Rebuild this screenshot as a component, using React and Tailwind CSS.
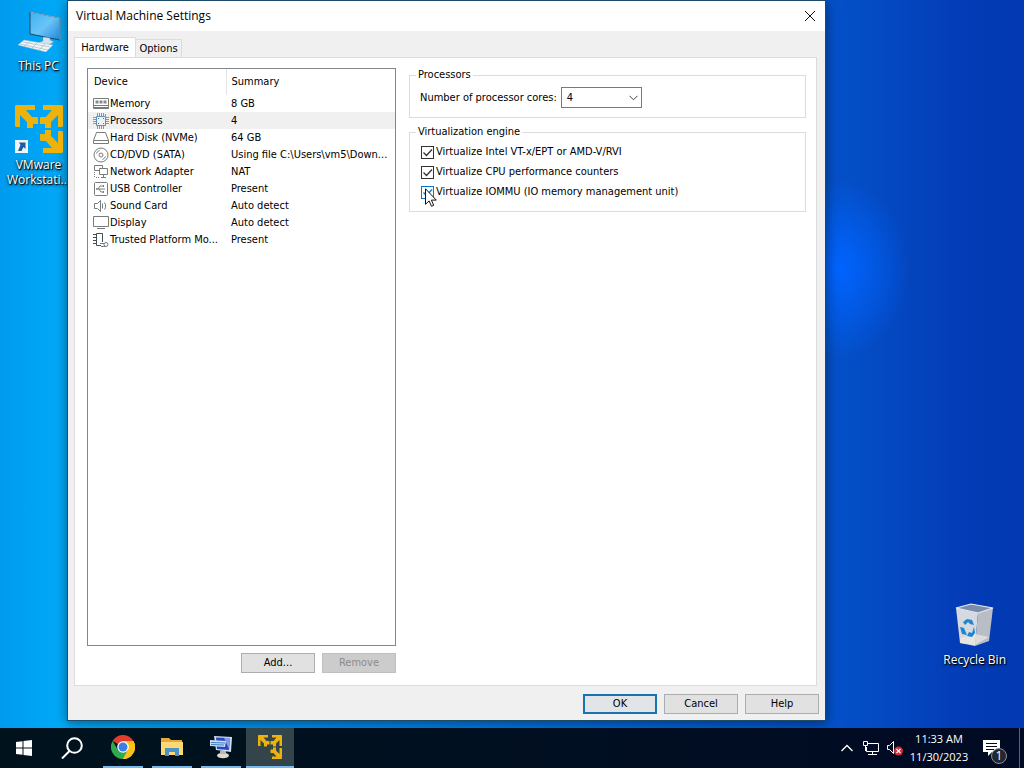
const arrow = 'M1 0h19v5h-9l6 7h5l1 1v6h-5v4h-6v-6l-7-7v12H1l-1-1V1z'

function VmwareLogo({ className }) {
  return (
    <svg viewBox="0 0 48 48" className={className} fill="#eeb20c" aria-hidden="true">
      <path d={arrow} />
      <path d={arrow} transform="matrix(-1 0 0 1 48 0)" />
      <path d={arrow} transform="matrix(-1 0 0 -1 48 48)" />
    </svg>
  )
}

function ThisPcIcon() {
  return (
    <svg viewBox="0 0 48 44" className="w-12 h-11" aria-hidden="true">
      <defs>
        <linearGradient id="pcScreen" x1="0" y1="0" x2="1" y2="1">
          <stop offset="0" stopColor="#3fb2f3" />
          <stop offset="0.5" stopColor="#6ac4f6" />
          <stop offset="1" stopColor="#2389de" />
        </linearGradient>
      </defs>
      <path d="M15 4l30 6v22L15 26z" fill="url(#pcScreen)" stroke="#17486b" strokeWidth="1" />
      <path d="M15 4l30 6v22" fill="none" stroke="#a5d8f3" strokeWidth="0.700" />
      <path d="M28 29l7 1v2l4 2-6 3-10-2 5-2z" fill="#d5e3ec" stroke="#7e9db3" strokeWidth="0.500" />
      <path d="M9 32l29 5-7 7L3 37z" fill="#f1f5f8" stroke="#9fb7c6" strokeWidth="0.500" />
      <path d="M8 34l27 5M5 36l28 6M16 33l-7 5M23 34l-6 6M30 36l-6 6" stroke="#a9bac6" strokeWidth="0.700" />
    </svg>
  )
}

function RecycleBinIcon() {
  return (
    <svg viewBox="0 0 42 46" className="w-[42px] h-[46px]" aria-hidden="true">
      <path d="M2 6l22 5-3 33-15-3z" fill="#d6d9df" />
      <path d="M24 11l15-5-4 33-14 5z" fill="#b9bdc6" />
      <path d="M2 6l15-4 22 4-15 5z" fill="#7c8cab" stroke="#eceff3" strokeWidth="1.200" />
      <path d="M6 36l15-4 14 3-14 8-15-2z" fill="#eee9e3" opacity="0.700" />
      <path d="M9 20l4-3 5 1 2 5-4-1-2-2-3 3zM6 25l4 1 3 7-5-1zM20 25l1 6-3 4-5-1 2-4 3 1z" fill="#1b85d6" />
    </svg>
  )
}

function DeviceIcon({ name }) {
  const drawings = {
    memory: (
      <>
        <path d="M.5 2.500h15v10H.5zM1 9.500h14M1 11.500h14" />
        <path d="M2.500 6h3M6.500 6h3M10.500 6h3" strokeWidth="3" stroke="#85898b" />
      </>
    ),
    cpu: (
      <>
        <path d="M3.500 3.500h9v9h-9z" stroke="#5f8fb2" />
        <path d="M4.500 0v3M6.500 0v3M8.500 0v3M10.500 0v3M12.500 1v2M4.500 13v3M6.500 13v3M8.500 13v3M10.500 13v3M0 4.500h3M0 6.500h3M0 8.500h3M0 10.500h3M13 4.500h3M13 6.500h3M13 8.500h3M13 10.500h3" stroke="#7e9bae" />
        <path d="M5 5.500h1M10 10.500h1M10 5.500h1M5 10.500h1" stroke="#1d7fc4" />
      </>
    ),
    disk: <path d="M3.500 2.500h9l3 8v3H.5v-3zM.5 10.500h15" />,
    cd: (
      <>
        <circle cx="8" cy="8" r="7" />
        <circle cx="8" cy="8" r="2" />
        <path d="M3.500 6.500a5 5 0 0 1 3-3M12.500 9.500a5 5 0 0 1-3 3" />
      </>
    ),
    network: (
      <>
        <path d="M6 6.500H1.500v-5h8v3M6.500 4.500h8v6h-8zM10.500 11v2M8 13.500h5" />
        <path d="M1.500 8v6M3 13.500h4" strokeDasharray="1 1" />
      </>
    ),
    usb: (
      <>
        <rect x="1.500" y="1.500" width="13" height="13" rx="1" />
        <path d="M3 8h9M5 8l2-3h3M6 8l2 3h2" />
        <path d="M3.500 8h1M10 5h1M10 11h1" strokeWidth="2" />
      </>
    ),
    sound: (
      <>
        <path d="M1.500 5.500h3l3-3v11l-3-3h-3z" />
        <path d="M9.500 5.500v5M11.500 4.500c1.500 2 1.500 5 0 7" />
      </>
    ),
    display: <path d="M.5 1.500h15v10H.5zM4 13.500h8" />,
    tpm: (
      <>
        <path d="M9.500 10V1.500h-6v12H8M0 2.500h3M0 5.500h3M0 8.500h3M0 11.500h3" stroke="#3f4f55" />
        <circle cx="13" cy="12.500" r="2" />
        <path d="M7 11.500h4M8 14.500h4" />
      </>
    ),
  }
  return (
    <svg viewBox="0 0 16 16" className="w-4 h-4 shrink-0" fill="none" stroke="#777c7e" aria-hidden="true">
      {drawings[name]}
    </svg>
  )
}

const devices = [
  { icon: 'memory', name: 'Memory', summary: '8 GB' },
  { icon: 'cpu', name: 'Processors', summary: '4', selected: true },
  { icon: 'disk', name: 'Hard Disk (NVMe)', summary: '64 GB' },
  { icon: 'cd', name: 'CD/DVD (SATA)', summary: 'Using file C:\\Users\\vm5\\Down...' },
  { icon: 'network', name: 'Network Adapter', summary: 'NAT' },
  { icon: 'usb', name: 'USB Controller', summary: 'Present' },
  { icon: 'sound', name: 'Sound Card', summary: 'Auto detect' },
  { icon: 'display', name: 'Display', summary: 'Auto detect' },
  { icon: 'tpm', name: 'Trusted Platform Mo...', summary: 'Present' },
]

function DeviceList() {
  return (
    <div className="flex-1 border border-[#82878c] bg-white">
      <table className="w-full table-fixed border-collapse text-left">
        <colgroup>
          <col className="w-[138px]" />
          <col />
        </colgroup>
        <thead>
          <tr className="h-[26px]">
            <th className="border-r border-[#e5e5e5] p-0 pl-1.5 font-normal">Device</th>
            <th className="p-0 pl-[5px] font-normal">Summary</th>
          </tr>
        </thead>
        <tbody>
          {devices.map((d) => (
            <tr key={d.name} className={d.selected ? 'h-[17px] bg-[#f0f0f0]' : 'h-[17px]'}>
              <td className="p-0 pl-[5px]">
                <div className="flex h-[17px] items-center gap-px whitespace-nowrap">
                  <DeviceIcon name={d.icon} />
                  {d.name}
                </div>
              </td>
              <td className="p-0 pl-[5px] whitespace-nowrap">{d.summary}</td>
            </tr>
          ))}
        </tbody>
      </table>
    </div>
  )
}

function PushButton({ children, primary, disabled }) {
  const look = primary
    ? 'border-2 border-[#1a72b0] bg-[#e1e5e8]'
    : disabled
      ? 'border border-[#bfbfbf] bg-[#cccccc] text-[#8b8b8b]'
      : 'border border-[#adadad] bg-[#e1e1e1]'
  return (
    <button disabled={disabled} className={`flex h-5 w-[74px] items-center justify-center ${look}`}>
      {children}
    </button>
  )
}

function CheckOption({ id, label, hot }) {
  return (
    <div className="flex h-5 items-center gap-0.5">
      <span className="grid">
        <input
          id={id}
          type="checkbox"
          defaultChecked
          className={`col-start-1 row-start-1 h-[13px] w-[13px] appearance-none border bg-white ${hot ? 'border-[#0078d7]' : 'border-[#333333]'}`}
        />
        <svg viewBox="0 0 13 13" className="pointer-events-none col-start-1 row-start-1 h-[13px] w-[13px]" fill="none" aria-hidden="true">
          <path d="M2.500 6.500l3 3 5.500-6" stroke={hot ? '#0078d7' : '#333333'} strokeWidth="1.300" />
        </svg>
      </span>
      <label htmlFor={id}>{label}</label>
    </div>
  )
}

function Cursor() {
  return (
    <svg viewBox="0 0 12 19" className="absolute top-[49px] left-[15px] h-[19px] w-3" aria-hidden="true">
      <path d="M.5.8v15.500l3.600-3.400 2.400 5.400 2.200-1-2.300-5.200h4.900z" fill="#fff" stroke="#111" />
    </svg>
  )
}

function HardwarePanel() {
  return (
    <div className="flex flex-1 gap-[13px] border border-[#dcdcdc] bg-white pt-2.5 pr-2.5 pb-3 pl-3">
      <div className="flex w-[309px] shrink-0 flex-col">
        <DeviceList />
        <div className="flex justify-end gap-[7px] pt-[7px]">
          <PushButton>Add...</PushButton>
          <PushButton disabled>Remove</PushButton>
        </div>
      </div>
      <div className="flex flex-1 flex-col gap-[7px]">
        <fieldset className="border border-[#dcdcdc] pb-[9px] pl-2.5">
          <legend className="-ml-1 px-0.5 leading-[14px]">Processors</legend>
          <div className="flex items-center gap-1 pt-[5px]">
            <label htmlFor="cores">Number of processor cores:</label>
            <span className="grid">
              <select id="cores" defaultValue="4" className="col-start-1 row-start-1 h-[21px] w-[81px] appearance-none border border-[#7a7a7a] bg-white pl-[5px]">
                <option>1</option>
                <option>2</option>
                <option>4</option>
                <option>8</option>
              </select>
              <svg viewBox="0 0 9 6" className="pointer-events-none col-start-1 row-start-1 mr-1 h-1.5 w-[9px] place-self-center justify-self-end" fill="none" aria-hidden="true">
                <path d="M.5.8l4 4 4-4" stroke="#444" />
              </svg>
            </span>
          </div>
        </fieldset>
        <fieldset className="relative border border-[#dcdcdc] pb-[9px] pl-[11px]">
          <legend className="-ml-[5px] px-0.5 leading-[14px]">Virtualization engine</legend>
          <div className="pt-[3px]">
            <CheckOption id="vtx" label="Virtualize Intel VT-x/EPT or AMD-V/RVI" />
            <CheckOption id="counters" label="Virtualize CPU performance counters" />
            <CheckOption id="iommu" label="Virtualize IOMMU (IO memory management unit)" hot />
          </div>
          <Cursor />
        </fieldset>
      </div>
    </div>
  )
}

function SettingsDialog() {
  return (
    <main className="mb-[7px] flex min-w-0 flex-1 flex-col border border-[#1b4a6b] bg-[#f0f0f0] font-['DejaVu_Sans_Condensed','DejaVu_Sans',sans-serif] text-[11px] leading-[14px] text-black shadow-[0_2px_12px_rgba(0,0,0,0.45)]">
      <header className="flex h-[30px] items-center justify-between bg-white pr-2 pl-2">
        <h1 className="font-['Open_Sans',sans-serif] text-[12px]">Virtual Machine Settings</h1>
        <button aria-label="Close" className="flex h-5 w-3.5 items-center justify-center">
          <svg viewBox="0 0 12 12" className="h-3 w-3" fill="none" stroke="#111" aria-hidden="true">
            <path d="M1 1l10 10M11 1L1 11" />
          </svg>
        </button>
      </header>
      <div className="flex flex-1 flex-col pt-1.5 pr-2 pl-1.5">
        <div className="flex items-end">
          <button className="-mb-px h-[21px] w-[62px] border border-b-0 border-[#dcdcdc] bg-white pb-px">Hardware</button>
          <button className="h-[18px] w-[46px] border border-b-0 border-l-0 border-[#dcdcdc] bg-[#f0f0f0]">Options</button>
        </div>
        <HardwarePanel />
      </div>
      <footer className="flex justify-end gap-[7px] pt-2 pr-1.5 pb-1.5">
        <PushButton primary>OK</PushButton>
        <PushButton>Cancel</PushButton>
        <PushButton>Help</PushButton>
      </footer>
    </main>
  )
}

const iconLabel = "text-center font-['Open_Sans',sans-serif] text-[12px] leading-[15px] text-white [text-shadow:1px_1px_1px_#000,0_1px_3px_#000]"

function Desktop() {
  return (
    <div className="flex flex-1">
      <aside className="flex w-[67px] shrink-0 flex-col items-center gap-8 pt-2 pl-2.5">
        <div className="flex flex-col items-center gap-1.5">
          <ThisPcIcon />
          <span className={iconLabel}>This PC</span>
        </div>
        <div className="flex flex-col items-center gap-1">
          <div className="relative">
            <VmwareLogo className="h-12 w-12" />
            {/* shortcut badge sits where the fourth arrow would be */}
            <svg viewBox="0 0 13 13" className="absolute bottom-0 left-0 h-[13px] w-[13px]" aria-hidden="true">
              <path d="M0 0h13v13H0z" fill="#eef4f8" />
              <path d="M4 2.500h6.500V9l-2-2-2 4H3l2.500-6z" fill="#1e5c9e" />
            </svg>
          </div>
          <span className={iconLabel}>
            VMware
            <br />
            Workstati...
          </span>
        </div>
      </aside>
      <SettingsDialog />
      <aside className="flex w-[198px] shrink-0 flex-col items-end justify-end pr-[18px] pb-[61px]">
        <div className="flex flex-col items-center gap-1">
          <RecycleBinIcon />
          <span className={iconLabel}>Recycle Bin</span>
        </div>
      </aside>
    </div>
  )
}

function ChromeIcon() {
  return (
    <svg viewBox="0 0 24 24" className="h-6 w-6" aria-hidden="true">
      <path d="M12 12L1.600 6A12 12 0 0 1 22.400 6z" fill="#e33b2e" />
      <path d="M12 12L22.400 6A12 12 0 0 1 12 24z" fill="#fbc116" />
      <path d="M12 24A12 12 0 0 1 1.600 6L7 15l5 2.500 5-2.500z" fill="#2da94f" />
      <path d="M12 6h10.400A12 12 0 0 1 12 24l5-9z" fill="#fbc116" />
      <circle cx="12" cy="12" r="5.800" fill="#fff" />
      <circle cx="12" cy="12" r="4.500" fill="#3b7ded" />
    </svg>
  )
}

function FolderIcon() {
  return (
    <svg viewBox="0 0 22 20" className="h-5 w-[22px]" aria-hidden="true">
      <path d="M0 1h8l2 2h11v15H0z" fill="#e8a93a" />
      <path d="M0 5h22v13H0z" fill="#fcd975" />
      <path d="M4 11h14v8h-4v-4H8v4H4z" fill="#4a93c9" />
    </svg>
  )
}

function RemoteIcon() {
  return (
    <svg viewBox="0 0 24 24" className="h-6 w-6" aria-hidden="true">
      <path d="M5 1l18 1-1 15-15-2z" fill="#d4dcec" />
      <path d="M7 2.500l14 .500-1 12-12-1z" fill="#2547c4" />
      <path d="M15 3h6l-1 11z" fill="#829ce8" />
      <path d="M1 5l16 1-1 6-15-1z" fill="#c9dcf2" />
      <path d="M2 7.500l14 .500M2 9.500l13 .500" stroke="#3a7fc4" />
      <ellipse cx="14" cy="20.500" rx="6" ry="2.800" fill="#dedad0" />
      <path d="M11 16h6v3h-6z" fill="#b8b8b8" />
    </svg>
  )
}

function TaskButton({ label, children, active }) {
  return (
    <button
      aria-label={label}
      className={`flex h-10 items-center justify-center border-b-2 border-[#76b9ed] ${active ? 'w-12 bg-[#33444b]' : 'w-10'}`}
    >
      {children}
    </button>
  )
}

function Taskbar() {
  return (
    <nav className="flex h-10 items-center justify-between bg-linear-to-r from-[#00131d] to-[#000a24] text-white">
      <div className="flex items-center">
        <button aria-label="Start" className="flex h-10 w-12 items-center justify-center">
          <svg viewBox="0 0 16 16" className="h-4 w-4" fill="#fff" aria-hidden="true">
            <path d="M0 2l6.500-.8v6.300H0zM7.500 1.100L16 0v7.500H7.500zM0 8.500h6.500v6.300L0 14zM7.500 8.500H16V16l-8.500-1.100z" />
          </svg>
        </button>
        <button aria-label="Search" className="flex h-10 w-12 items-center justify-center">
          <svg viewBox="0 0 22 22" className="h-[22px] w-[22px]" fill="none" stroke="#fff" strokeWidth="2" aria-hidden="true">
            <circle cx="13.500" cy="8.500" r="7.300" />
            <path d="M8.500 14L1 21.500" />
          </svg>
        </button>
        <div className="ml-[7px] flex gap-[9px]">
          <TaskButton label="Google Chrome"><ChromeIcon /></TaskButton>
          <TaskButton label="File Explorer"><FolderIcon /></TaskButton>
          <TaskButton label="Remote Desktop"><RemoteIcon /></TaskButton>
        </div>
        <div className="ml-[5px]">
          <TaskButton label="VMware Workstation" active>
            <VmwareLogo className="h-6 w-6" />
          </TaskButton>
        </div>
      </div>
      <div className="flex h-10 items-center">
        <svg viewBox="0 0 12 8" className="h-2 w-3" fill="none" stroke="#fff" strokeWidth="1.300" aria-hidden="true">
          <path d="M.5 7L6 1.500 11.500 7" />
        </svg>
        <svg viewBox="0 0 16 14" className="ml-2.5 h-3.5 w-4" fill="none" stroke="#fff" aria-hidden="true">
          <path d="M5 2.500h10.500v8H3.500V6M9.500 11v2M5 13.500h9M.5.5h4v4h-4zM2.500 5v5" />
        </svg>
        <svg viewBox="0 0 16 16" className="ml-2 h-4 w-4" fill="none" aria-hidden="true">
          <path d="M.5 5.500h2l4-4v12l-4-4h-2z" stroke="#fff" />
          <circle cx="11.500" cy="11" r="4.500" fill="#d8292f" />
          <path d="M9.500 9l4 4M13.500 9l-4 4" stroke="#fff" strokeWidth="1.200" />
        </svg>
        <div className="flex w-[72px] flex-col items-center font-['Open_Sans',sans-serif] text-[11px] leading-[18px]">
          <time>11:33 AM</time>
          <time>11/30/2023</time>
        </div>
        <button aria-label="Notifications" className="relative ml-2 flex h-10 w-6 items-center">
          <svg viewBox="0 0 17 18" className="h-[18px] w-[17px]" aria-hidden="true">
            <path d="M0 1h17v12H9l-4 4v-4H0z" fill="#fff" />
            <path d="M3 4.500h11M3 7.500h11M3 10.500h8" stroke="#000a20" />
          </svg>
          <span className="absolute right-0 bottom-1 flex h-4 w-4 items-center justify-center rounded-full border border-[#8a9096] bg-[#23282e] font-['Open_Sans',sans-serif] text-[12px]">1</span>
        </button>
        <div className="ml-3 h-10 w-[5px] border-l border-[#5a6478]" />
      </div>
    </nav>
  )
}

export default function App() {
  return (
    <div className="flex min-h-screen flex-col bg-[radial-gradient(ellipse_70px_90px_at_82%_35%,#0064ff,transparent),linear-gradient(to_right,#009bee_0%,#00aaf8_6%,#0068d8_60%,#0450c8_82%,#033cb6_94%,#0239b2_100%)]">
      <Desktop />
      <Taskbar />
    </div>
  )
}
